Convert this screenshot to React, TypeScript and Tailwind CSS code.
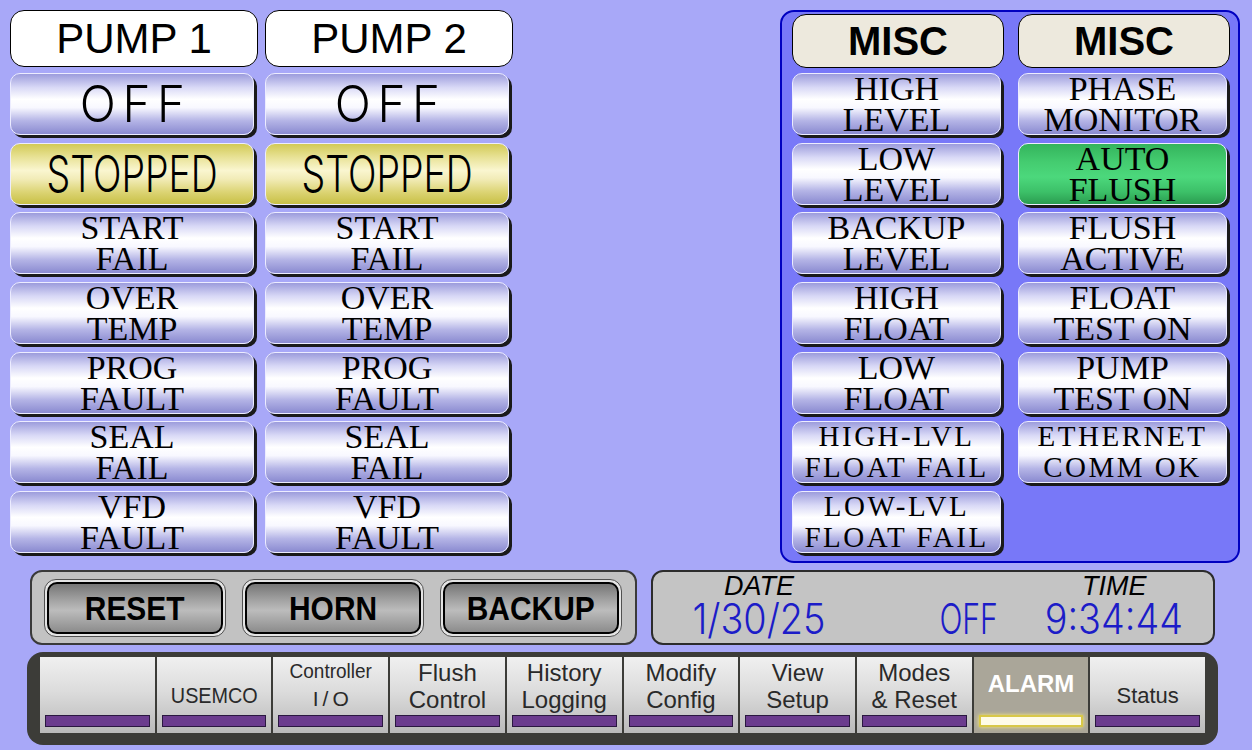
import React from "react";

const lavBg =
  "bg-[linear-gradient(to_bottom,#9c9cdc_0%,#d8d8f6_22%,#ffffff_42%,#f8f8ff_56%,#b4b4e6_78%,#8a8ad0_100%)]";
const yellowBg =
  "bg-[linear-gradient(to_bottom,#d2ca56_0%,#e8e296_22%,#faf6d0_44%,#f2ecb8_58%,#dcd474_80%,#c8c046_100%)]";
const greenBg =
  "bg-[linear-gradient(to_bottom,#34b45c_0%,#44cc70_30%,#4cd87c_55%,#3cc068_80%,#2a9c50_100%)]";

type Tone = "lav" | "yellow" | "green";

function Btn({
  children,
  tone = "lav",
  w = "w-[244px]",
}: {
  children?: React.ReactNode;
  tone?: Tone;
  w?: string;
}) {
  const bg = tone === "yellow" ? yellowBg : tone === "green" ? greenBg : lavBg;
  return (
    <div
      className={`${w} h-[62px] rounded-[10px] border border-[#ececff] shadow-[3px_3px_0_#1a1a1a] flex flex-col items-center justify-center ${bg}`}
    >
      {children}
    </div>
  );
}

function Two({ a, b, wide }: { a: string; b: string; wide?: boolean }) {
  return (
    <div
      className={`font-['Liberation_Serif',serif] text-black text-center whitespace-nowrap ${
        wide ? "text-[29px] tracking-[2.5px] leading-[31px]" : "text-[34px] leading-[31px]"
      }`}
    >
      <div>{a}</div>
      <div>{b}</div>
    </div>
  );
}

function Big({ text, spaced }: { text: string; spaced?: boolean }) {
  return (
    <span
      className={`inline-block font-['Inter',sans-serif] font-light text-[50px] leading-none text-black ${
        spaced ? "tracking-[7px] pl-[7px] scale-x-[0.95]" : "scale-x-[0.75]"
      }`}
    >
      {text}
    </span>
  );
}

const pumpRows: { a: string; b: string }[] = [
  { a: "START", b: "FAIL" },
  { a: "OVER", b: "TEMP" },
  { a: "PROG", b: "FAULT" },
  { a: "SEAL", b: "FAIL" },
  { a: "VFD", b: "FAULT" },
];

function PumpColumn({ name }: { name: string }) {
  return (
    <div className="w-[248px] flex flex-col">
      <div className="h-[57px] rounded-[14px] border-[1.5px] border-black bg-white flex items-center justify-center font-['Liberation_Sans',Arial,sans-serif] text-[42px] leading-none text-black">
        {name}
      </div>
      <div className="mt-[6px] flex flex-col gap-[7.67px]">
        <Btn>
          <Big text="OFF" spaced />
        </Btn>
        <Btn tone="yellow">
          <Big text="STOPPED" />
        </Btn>
        {pumpRows.map((r) => (
          <Btn key={r.a + r.b}>
            <Two a={r.a} b={r.b} />
          </Btn>
        ))}
      </div>
    </div>
  );
}

const miscItems: { a: string; b: string; tone?: Tone; wide?: boolean; empty?: boolean }[] = [
  { a: "HIGH", b: "LEVEL" },
  { a: "PHASE", b: "MONITOR" },
  { a: "LOW", b: "LEVEL" },
  { a: "AUTO", b: "FLUSH", tone: "green" },
  { a: "BACKUP", b: "LEVEL" },
  { a: "FLUSH", b: "ACTIVE" },
  { a: "HIGH", b: "FLOAT" },
  { a: "FLOAT", b: "TEST ON" },
  { a: "LOW", b: "FLOAT" },
  { a: "PUMP", b: "TEST ON" },
  { a: "HIGH-LVL", b: "FLOAT FAIL", wide: true },
  { a: "ETHERNET", b: "COMM OK", wide: true },
  { a: "LOW-LVL", b: "FLOAT FAIL", wide: true },
  { a: "", b: "", empty: true },
];

function MiscPanel() {
  return (
    <div className="ml-auto mr-[12px] w-[460px] h-[553px] rounded-[14px] border-2 border-[#0000c0] bg-[#7878f8] pt-[2px] pl-[10px]">
      <div className="grid grid-cols-[212px_212px] gap-x-[14px]">
        {["MISC", "MISC"].map((t, i) => (
          <div
            key={i}
            className="h-[54px] rounded-[14px] border-[1.5px] border-black bg-[#ede9dd] flex items-center justify-center font-['Liberation_Sans',Arial,sans-serif] font-bold text-[40px] leading-none text-black"
          >
            {t}
          </div>
        ))}
      </div>
      <div className="mt-[5px] grid grid-cols-[212px_212px] gap-x-[14px] gap-y-[7.67px]">
        {miscItems.map((m, i) =>
          m.empty ? (
            <div key={i} />
          ) : (
            <Btn key={i} tone={m.tone} w="w-[209px]">
              <Two a={m.a} b={m.b} wide={m.wide} />
            </Btn>
          )
        )}
      </div>
    </div>
  );
}

function GrayButton({ label }: { label: string }) {
  return (
    <div className="w-[182px] h-[58px] rounded-[12px] border border-[#505050] bg-[#e4e4e4] p-[2px]">
      <div className="h-full rounded-[10px] border-2 border-black bg-[linear-gradient(to_bottom,#767676_0%,#a4a4a4_35%,#bcbcbc_55%,#8c8c8c_100%)] flex items-center justify-center">
        <span className="inline-block font-['Liberation_Sans',Arial,sans-serif] font-bold text-[34px] leading-none text-black scale-x-[0.88]">
          {label}
        </span>
      </div>
    </div>
  );
}

const navItems: {
  l1?: string;
  l2?: string;
  single?: string;
  kind?: "small" | "alarm";
}[] = [
  {},
  { single: "USEMCO" },
  { l1: "Controller", l2: "I/O", kind: "small" },
  { l1: "Flush", l2: "Control" },
  { l1: "History", l2: "Logging" },
  { l1: "Modify", l2: "Config" },
  { l1: "View", l2: "Setup" },
  { l1: "Modes", l2: "& Reset" },
  { single: "ALARM", kind: "alarm" },
  { single: "Status" },
];

function NavItem({ item }: { item: (typeof navItems)[number] }) {
  const alarm = item.kind === "alarm";
  return (
    <div
      className={`flex-1 flex flex-col ${
        alarm
          ? "bg-[#aaa699]"
          : "bg-[linear-gradient(to_bottom,#f0f0f0_0%,#dcdcdc_45%,#c6c6c6_80%,#bababa_100%)]"
      }`}
    >
      <div className="h-[58px] flex flex-col items-center justify-center font-['Liberation_Sans',Arial,sans-serif] text-[#2a2a2a] whitespace-nowrap">
        {item.single && !alarm && (
          <span
            className={`inline-block pt-[20px] text-[22px] leading-none ${
              item.single === "USEMCO" ? "scale-x-[0.9]" : ""
            }`}
          >
            {item.single}
          </span>
        )}
        {alarm && (
          <span className="pb-[4px] text-[24px] font-bold leading-none text-white">
            ALARM
          </span>
        )}
        {item.l1 && item.kind === "small" && (
          <>
            <span className="text-[19px] leading-[24px] scale-y-[1.1] inline-block">{item.l1}</span>
            <span className="text-[21px] leading-[28px] tracking-[4px] pl-[4px] pt-[2px]">I/O</span>
          </>
        )}
        {item.l1 && item.kind !== "small" && (
          <>
            <span className="text-[24px] leading-[27px]">{item.l1}</span>
            <span className="text-[24px] leading-[27px]">{item.l2}</span>
          </>
        )}
      </div>
      {alarm ? (
        <div className="mx-[5px] h-[12px] border-2 border-[#d8c848] bg-[#fffce8] shadow-[0_0_4px_#fff07a]" />
      ) : (
        <div className="mx-[5px] h-[12px] border border-[#2a1840] bg-[#6b3c8e]" />
      )}
    </div>
  );
}

export default function App() {
  return (
    <div className="w-[1252px] h-[750px] overflow-hidden bg-[#a8a8f8] pt-[10px] flex flex-col">
      <div className="flex h-[553px]">
        <div className="ml-[10px] flex gap-[7px]">
          <PumpColumn name="PUMP 1" />
          <PumpColumn name="PUMP 2" />
        </div>
        <MiscPanel />
      </div>

      <div className="mt-[7px] flex h-[75px]">
        <div className="ml-[30px] w-[607px] h-[75px] rounded-[12px] border-2 border-[#3a3a3a] bg-[#c2c2c2] flex items-center gap-[16px] pl-[12px]">
          <GrayButton label="RESET" />
          <GrayButton label="HORN" />
          <GrayButton label="BACKUP" />
        </div>

        <div className="ml-[14px] w-[564px] h-[75px] rounded-[12px] border-2 border-[#2c2c2c] bg-[#c4c4c4] flex items-start pt-[1px]">
          <div className="ml-[32px] flex flex-col items-center">
            <span className="font-['Liberation_Sans',Arial,sans-serif] italic text-[27px] leading-[26px] text-black">
              DATE
            </span>
            <span className="inline-block font-['Inter',sans-serif] font-light text-[42px] leading-[40px] text-[#1c1cc8] scale-x-[0.9]">
              1/30/25
            </span>
          </div>
          <div className="ml-auto mr-[22px] flex items-end gap-[28px]">
            <span className="inline-block font-['Inter',sans-serif] font-light text-[42px] leading-[40px] text-[#1c1cc8] scale-x-[0.72]">
              OFF
            </span>
            <div className="flex flex-col items-center">
              <span className="font-['Liberation_Sans',Arial,sans-serif] italic text-[27px] leading-[26px] text-black">
                TIME
              </span>
              <span className="inline-block font-['Inter',sans-serif] font-light text-[42px] leading-[40px] text-[#1c1cc8] scale-x-[0.9]">
                9:34:44
              </span>
            </div>
          </div>
        </div>
      </div>

      <div className="mt-[7px] ml-[27px] w-[1191px] h-[93px] rounded-[16px] bg-[#3c3c38] px-[13px] pt-[5px] pb-[12px] flex gap-[2px]">
        {navItems.map((it, i) => (
          <NavItem key={i} item={it} />
        ))}
      </div>
    </div>
  );
}
